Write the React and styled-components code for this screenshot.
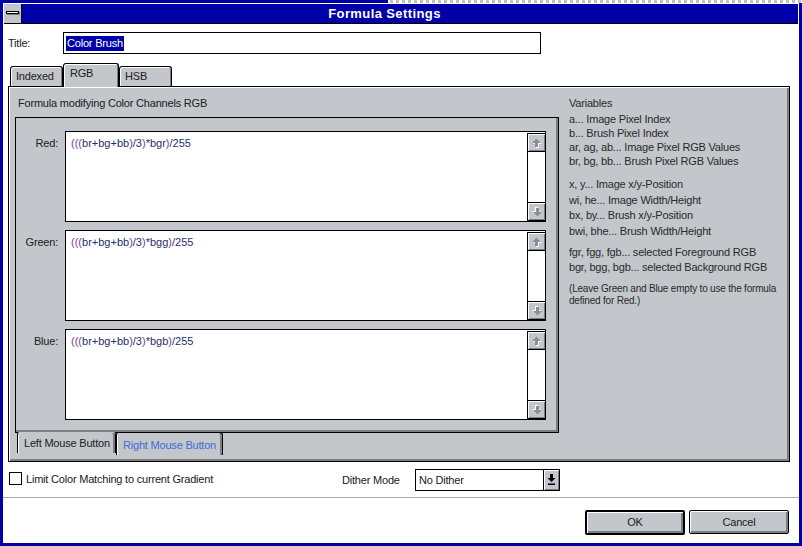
import React from 'react';
import styled, { createGlobalStyle } from 'styled-components';

const GRAY = '#c3c6ca';
const SHADOW = '#7b7f84';
const BLUE = '#0000a8';
const INK = '#202020';

const GlobalStyle = createGlobalStyle`
  * { box-sizing: border-box; }
  html, body { margin: 0; padding: 0; background: #fff; }
  body {
    font-family: "Liberation Sans", Arial, sans-serif;
    font-size: 11px;
    letter-spacing: -0.2px;
    color: ${INK};
  }
`;

const variables = [
  { lh: 14, gap: 2, lines: ['a... Image Pixel Index', 'b... Brush Pixel Index', 'ar, ag, ab... Image Pixel RGB Values', 'br, bg, bb... Brush Pixel RGB Values'] },
  { lh: 15.5, gap: 9, lines: ['x, y... Image x/y-Position', 'wi, he... Image Width/Height', 'bx, by... Brush x/y-Position', 'bwi, bhe... Brush Width/Height'] },
  { lh: 15, gap: 6, lines: ['fgr, fgg, fgb... selected Foreground RGB', 'bgr, bgg, bgb... selected Background RGB'] },
];

const channels = [
  { label: 'Red:', formula: '(((br+bg+bb)/3)*bgr)/255' },
  { label: 'Green:', formula: '(((br+bg+bb)/3)*bgg)/255' },
  { label: 'Blue:', formula: '(((br+bg+bb)/3)*bgb)/255' },
];

const Window = styled.div`
  width: 802px;
  height: 546px;
  display: flex;
  flex-direction: column;
  border: 3px solid ${BLUE};
  border-top: none;
  background: #fff;
`;
const TopEdge = styled.div`
  height: 3px;
  margin: 0 -3px;
  display: flex;
  background: repeating-linear-gradient(90deg, #c0c0c0 0 3px, #fff 3px 6px);
`;
const BlueEdge = styled.div`
  width: 388px;
  background: ${BLUE};
`;
const TitleBar = styled.div`
  height: 20px;
  margin: 1px 1px 0;
  display: flex;
  background: ${BLUE};
  border-bottom: 1px solid #000;
`;
const SysMenu = styled.div`
  width: 18px;
  background: ${GRAY};
  border-right: 1px solid #000;
  display: flex;
  align-items: center;
  justify-content: center;
`;
const SysDash = styled.div`
  width: 13px;
  height: 3px;
  background: #fff;
  border: 1px solid #000;
  box-shadow: 1px 1px 0 ${SHADOW};
  margin-top: -2px;
`;
const Caption = styled.div`
  flex: 1;
  padding-right: 51px;
  text-align: center;
  color: #fff;
  font-weight: bold;
  font-size: 13px;
  letter-spacing: 0.4px;
  line-height: 19px;
`;
const Content = styled.div`
  padding: 0 8px 0 5px;
  display: flex;
  flex-direction: column;
`;
const TitleRow = styled.div`
  margin-top: 8px;
  height: 22px;
  display: flex;
  align-items: center;
`;
const FieldLabel = styled.div`
  width: 55px;
`;
const TitleInput = styled.div`
  width: 478px;
  height: 22px;
  border: 1px solid #000;
  padding-left: 2px;
  display: flex;
  align-items: center;
`;
const Selected = styled.span`
  background: ${BLUE};
  color: #fff;
  line-height: 15px;
  padding: 0 1px;
`;
const TabStrip = styled.div`
  margin-top: 9px;
  height: 23px;
  padding-left: 2px;
  display: flex;
  align-items: flex-end;
`;
const Tab = styled.div`
  position: relative;
  z-index: 1;
  width: ${p => p.$w}px;
  height: ${p => (p.$active ? 24 : 20)}px;
  margin-bottom: ${p => (p.$active ? -1 : 0)}px;
  padding: 3px 0 0 ${p => (p.$active ? 6 : 5)}px;
  background: ${GRAY};
  border: 1px solid #000;
  border-bottom: none;
  border-radius: 3px 3px 0 0;
  box-shadow: inset 1px 1px 0 #fff, inset -1px 0 0 ${SHADOW};
  line-height: 13px;
`;
const Panel = styled.div`
  position: relative;
  z-index: 0;
  width: 782px;
  height: 376px;
  padding: 9px 0 0 6px;
  display: flex;
  background: ${GRAY};
  border: 1px solid #000;
  box-shadow: inset 1px 1px 0 #fff, inset -2px -2px 0 ${SHADOW};
`;
const FormulaColumn = styled.div`
  width: 544px;
  display: flex;
  flex-direction: column;
`;
const Heading = styled.div`
  line-height: 14px;
  padding-left: 3px;
`;
const InnerPanel = styled.div`
  margin-top: 7px;
  height: 316px;
  padding-top: 13px;
  display: flex;
  flex-direction: column;
  gap: 8px;
  border: 1px solid #000;
  box-shadow: inset -2px -2px 0 ${SHADOW};
  position: relative;
  z-index: 0;
`;
const ChannelRow = styled.div`
  display: flex;
`;
const ChannelLabel = styled.div`
  width: 49px;
  padding: 5px 7px 0 0;
  text-align: right;
  line-height: 14px;
`;
const Field = styled.div`
  width: 481px;
  height: 91px;
  background: #fff;
  border: 1px solid #000;
  display: flex;
`;
const FormulaText = styled.div`
  flex: 1;
  padding: 4px 0 0 5px;
  line-height: 14px;
  letter-spacing: 0;
  color: #26306a;
`;
const Paren = styled.span`
  color: #7a3a9a;
`;
const Scrollbar = styled.div`
  width: 18px;
  margin-top: 1px;
  border: 1px solid #000;
  border-right: none;
  display: flex;
  flex-direction: column;
  justify-content: space-between;
  background: #fff;
`;
const ScrollButton = styled.div`
  height: 18px;
  background: ${GRAY};
  border-${p => (p.$down ? 'top' : 'bottom')}: 1px solid #000;
  box-shadow: inset 1px 1px 0 #fff, inset -1px -1px 0 ${SHADOW};
  display: flex;
  align-items: center;
  justify-content: center;
`;
const BottomTabs = styled.div`
  margin-top: -1px;
  padding-left: 2px;
  display: flex;
  align-items: flex-start;
  position: relative;
  z-index: 1;
`;
const MouseTab = styled.div`
  width: ${p => p.$w}px;
  height: ${p => (p.$active ? 21 : 23)}px;
  padding: ${p => (p.$active ? 3 : 5)}px 0 0 6px;
  background: ${GRAY};
  color: ${p => (p.$active ? INK : '#3a6ed8')};
  border: 1px solid #000;
  border-bottom: none;
  border-top-color: ${p => (p.$active ? GRAY : '#000')};
  border-radius: 3px 3px 0 0;
  box-shadow: inset 1px 0 0 #fff, inset -2px 0 0 ${SHADOW};
  line-height: 14px;
  white-space: nowrap;
`;
const VarColumn = styled.div`
  margin-left: 10px;
  display: flex;
  flex-direction: column;
  color: #2a2a2a;
`;
const VarTitle = styled.div`
  line-height: 14px;
`;
const VarGroup = styled.div`
  margin-top: ${p => p.$gap}px;
  line-height: ${p => p.$lh}px;
`;
const Note = styled.div`
  margin-top: 7.5px;
  font-size: 10px;
  line-height: 12px;
  white-space: nowrap;
`;
const OptionsRow = styled.div`
  margin-top: 7px;
  height: 22px;
  display: flex;
  align-items: center;
`;
const CheckGroup = styled.div`
  width: 334px;
  padding-left: 1px;
  margin-top: -3px;
  display: flex;
  align-items: center;
  gap: 4px;
`;
const CheckBox = styled.div`
  width: 13px;
  height: 13px;
  border: 1px solid #000;
  background: #fff;
`;
const DitherLabel = styled.div`
  width: 73px;
`;
const Combo = styled.div`
  width: 145px;
  height: 22px;
  border: 1px solid #000;
  display: flex;
  align-items: center;
`;
const ComboText = styled.div`
  flex: 1;
  padding-left: 3px;
`;
const ComboButton = styled.div`
  width: 16px;
  height: 100%;
  border-left: 1px solid #000;
  background: ${GRAY};
  box-shadow: inset 1px 1px 0 #fff, inset -1px -1px 0 ${SHADOW};
  display: flex;
  align-items: center;
  justify-content: center;
`;
const Separator = styled.div`
  margin-top: 6px;
  height: 1px;
  background: #a8abae;
`;
const Footer = styled.div`
  margin-top: 12px;
  padding-right: 10px;
  display: flex;
  justify-content: flex-end;
  align-items: flex-start;
  gap: 4px;
`;
const Button = styled.div`
  width: 100px;
  height: ${p => (p.$default ? 25 : 24)}px;
  border: ${p => (p.$default ? 2 : 1)}px solid #000;
  border-radius: 2px;
  background: ${GRAY};
  box-shadow: inset 1px 1px 0 #fff, inset -2px -2px 0 ${SHADOW};
  display: flex;
  align-items: center;
  justify-content: center;
  padding-bottom: 1px;
`;

const ScrollArrow = ({ down }) => (
  <svg width="10" height="10" viewBox="0 0 10 10" style={{ transform: down ? 'rotate(180deg)' : 'none' }}>
    <polygon points="5.5,1.5 10,6 7,6 7,10 4,10 4,6 1,6" fill="#fff" />
    <polygon points="4.5,0.5 9,5 6,5 6,9 3,9 3,5 0,5" fill="#8b8f93" />
  </svg>
);

const ComboArrow = () => (
  <svg width="9" height="12" viewBox="0 0 9 12">
    <polygon points="3,0 6,0 6,4 8.5,4 4.5,8 0.5,4 3,4" fill="#000" />
    <rect x="1" y="9.5" width="7" height="1.5" fill="#000" />
  </svg>
);

const Formula = ({ text }) => (
  <FormulaText>
    {text.split(/([()])/).filter(Boolean).map((part, i) =>
      part === '(' || part === ')' ? <Paren key={i}>{part}</Paren> : <span key={i}>{part}</span>
    )}
  </FormulaText>
);

export default function App() {
  return (
    <>
      <GlobalStyle />
      <Window>
        <TopEdge><BlueEdge /></TopEdge>
        <TitleBar>
          <SysMenu><SysDash /></SysMenu>
          <Caption>Formula Settings</Caption>
        </TitleBar>
        <Content>
          <TitleRow>
            <FieldLabel>Title:</FieldLabel>
            <TitleInput><Selected>Color Brush</Selected></TitleInput>
          </TitleRow>
          <TabStrip>
            <Tab $w={53}>Indexed</Tab>
            <Tab $w={56} $active>RGB</Tab>
            <Tab $w={53}>HSB</Tab>
          </TabStrip>
          <Panel>
            <FormulaColumn>
              <Heading>Formula modifying Color Channels RGB</Heading>
              <InnerPanel>
                {channels.map(c => (
                  <ChannelRow key={c.label}>
                    <ChannelLabel>{c.label}</ChannelLabel>
                    <Field>
                      <Formula text={c.formula} />
                      <Scrollbar>
                        <ScrollButton><ScrollArrow /></ScrollButton>
                        <ScrollButton $down><ScrollArrow down /></ScrollButton>
                      </Scrollbar>
                    </Field>
                  </ChannelRow>
                ))}
              </InnerPanel>
              <BottomTabs>
                <MouseTab $w={99} $active>Left Mouse Button</MouseTab>
                <MouseTab $w={107}>Right Mouse Button</MouseTab>
              </BottomTabs>
            </FormulaColumn>
            <VarColumn>
              <VarTitle>Variables</VarTitle>
              {variables.map((g, i) => (
                <VarGroup key={i} $gap={g.gap} $lh={g.lh}>
                  {g.lines.map(l => <div key={l}>{l}</div>)}
                </VarGroup>
              ))}
              <Note>
                <div>(Leave Green and Blue empty to use the formula</div>
                <div>defined for Red.)</div>
              </Note>
            </VarColumn>
          </Panel>
          <OptionsRow>
            <CheckGroup>
              <CheckBox />
              <span>Limit Color Matching to current Gradient</span>
            </CheckGroup>
            <DitherLabel>Dither Mode</DitherLabel>
            <Combo>
              <ComboText>No Dither</ComboText>
              <ComboButton><ComboArrow /></ComboButton>
            </Combo>
          </OptionsRow>
        </Content>
        <Separator />
        <Footer>
          <Button $default>OK</Button>
          <Button>Cancel</Button>
        </Footer>
      </Window>
    </>
  );
}
